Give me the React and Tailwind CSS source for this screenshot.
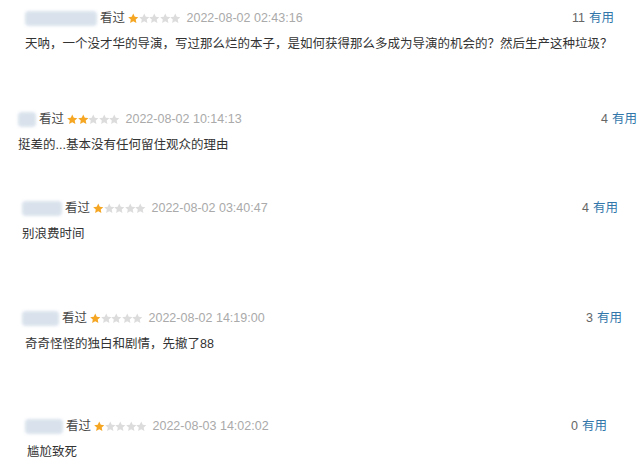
import React from 'react';

const reviews = [
    { pt: 'pt-[8px]', pl: 'pl-[25px]', pr: 'pr-[26px]', blur: 'w-[72px]', rating: 1, date: '2022-08-02 02:43:16', votes: 11, text: '天呐，一个没才华的导演，写过那么烂的本子，是如何获得那么多成为导演的机会的？然后生产这种垃圾？', tl: 'pl-0' },
    { pt: 'pt-[55px]', pl: 'pl-[18px]', pr: 'pr-[3px]', blur: 'w-[18px]', rating: 2, date: '2022-08-02 10:14:13', votes: 4, text: '挺差的...基本没有任何留住观众的理由', tl: 'pl-0' },
    { pt: 'pt-[43px]', pl: 'pl-[22px]', pr: 'pr-[22px]', blur: 'w-[40px]', rating: 1, date: '2022-08-02 03:40:47', votes: 4, text: '别浪费时间', tl: 'pl-0' },
    { pt: 'pt-[64px]', pl: 'pl-[22px]', pr: 'pr-[18px]', blur: 'w-[37px]', rating: 1, date: '2022-08-02 14:19:00', votes: 3, text: '奇奇怪怪的独白和剧情，先撤了88', tl: 'pl-[3px]' },
    { pt: 'pt-[62px]', pl: 'pl-[25px]', pr: 'pr-[33px]', blur: 'w-[38px]', rating: 1, date: '2022-08-03 14:02:02', votes: 0, text: '尴尬致死', tl: 'pl-[2px]' },
];

function Star({ on }) {
    return (
        <svg width="10.5" height="11" viewBox="0 0 24 24" className="shrink-0">
            <path
                d="M12 0.5l3.5 7.4 8.1 1-6 5.6 1.6 8L12 18.5l-7.2 4 1.6-8-6-5.6 8.1-1z"
                fill={on ? '#f5a623' : '#dcdcdc'}
            />
        </svg>
    );
}

function Review({ r }) {
    return (
        <div className={`${r.pt} ${r.pl} ${r.pr}`}>
            <div className="h-[20px] flex items-center text-[12.5px]">
                <div className={`${r.blur} h-[15px] bg-[#d9e2ec] blur-[1.5px] rounded-sm`} />
                <span className="ml-[3px] text-[#494949]">看过</span>
                <span className="ml-[3px] flex items-center">
                    {[1, 2, 3, 4, 5].map((i) => (
                        <Star key={i} on={i <= r.rating} />
                    ))}
                </span>
                <span className="ml-[6px] text-[#aaaaaa]">{r.date}</span>
                <span className="ml-auto">
                    <span className="text-[#666666]">{r.votes}</span>
                    <span className="ml-[4px] text-[#3377aa]">有用</span>
                </span>
            </div>
            <div className={`mt-[6px] h-[20px] leading-[20px] text-[12.5px] text-[#333333] ${r.tl}`}>
                {r.text}
            </div>
        </div>
    );
}

export default function App() {
    return (
        <div
            className="w-[640px] h-[474px] bg-white overflow-hidden"
            style={{ fontFamily: '"Liberation Sans", "Noto Sans CJK SC", sans-serif' }}
        >
            {reviews.map((r, i) => (
                <Review key={i} r={r} />
            ))}
        </div>
    );
}
